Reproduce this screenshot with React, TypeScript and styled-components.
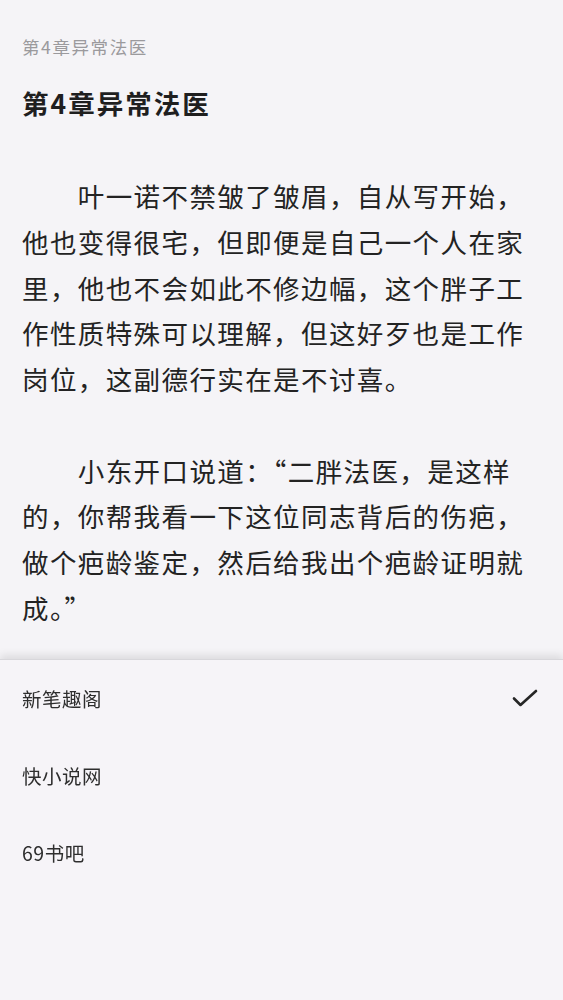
import styled, {createGlobalStyle} from "styled-components";

const GlobalStyle = createGlobalStyle`
    html, body {
        margin: 0;
        padding: 0;
        background: #f5f4f7;
    }
    body {
        font-family: "Noto Sans CJK SC", "Noto Sans", sans-serif;
        -webkit-font-smoothing: antialiased;
    }
`

const PageStyle = styled.main`
    min-height: 1000px;
    padding: 35px 22px 0 22px;
    box-sizing: border-box;
    background: #f5f4f7;
    color: #222;
`

const ChapterBarStyle = styled.div`
    font-size: 17.5px;
    line-height: 24px;
    letter-spacing: 1.6px;
    color: #9b9a9d;
`

const TitleStyle = styled.h1`
    margin: 26px 0 0 0;
    font-size: 26.5px;
    line-height: 36px;
    font-weight: 700;
    letter-spacing: 2px;
    color: #1f1f1f;
`

const ArticleStyle = styled.article`
    margin-top: 52px;
    display: flex;
    flex-direction: column;
    gap: 45.75px;
`

const ParagraphStyle = styled.p`
    margin: 0;
    font-size: 26.5px;
    line-height: 45.75px;
    letter-spacing: 1.4px;
    text-indent: 55.8px;
    color: #232323;
`

const SheetStyle = styled.section`
    position: fixed;
    left: 0;
    right: 0;
    bottom: 0;
    height: 340px;
    background: #f6f4f8;
    box-shadow: 0 -4px 8px rgba(0, 0, 0, 0.1);
    border-top: 1px solid #d8d7db;
`

const SourceRowStyle = styled.div`
    height: 77px;
    display: flex;
    align-items: center;
    justify-content: space-between;
    padding: 0 24px 0 22px;
    font-size: 19.5px;
    letter-spacing: 0.5px;
    color: #2e2e2e;
`

const paragraphs = [
    "叶一诺不禁皱了皱眉，自从写开始，他也变得很宅，但即便是自己一个人在家里，他也不会如此不修边幅，这个胖子工作性质特殊可以理解，但这好歹也是工作岗位，这副德行实在是不讨喜。",
    "小东开口说道：“二胖法医，是这样的，你帮我看一下这位同志背后的伤疤，做个疤龄鉴定，然后给我出个疤龄证明就成。”",
];

const sources = ["新笔趣阁", "快小说网", "69书吧"];

function CheckIcon() {
    return (
        <svg width="28" height="20" viewBox="0 0 28 20">
            <polyline points="3,9.5 9.5,16 25,2" fill="none" stroke="#262626" strokeWidth="2.6"
                      strokeLinecap="round" strokeLinejoin="round"/>
        </svg>
    );
}

export default function App() {
    const selected = 0;

    return (
        <>
            <GlobalStyle/>
            <PageStyle>
                <ChapterBarStyle>第4章异常法医</ChapterBarStyle>
                <TitleStyle>第4章异常法医</TitleStyle>
                <ArticleStyle>
                    {paragraphs.map((text, i) => (
                        <ParagraphStyle key={i}>{text}</ParagraphStyle>
                    ))}
                </ArticleStyle>
            </PageStyle>
            <SheetStyle>
                {sources.map((name, i) => (
                    <SourceRowStyle key={name}>
                        <span>{name}</span>
                        {i === selected && <CheckIcon/>}
                    </SourceRowStyle>
                ))}
            </SheetStyle>
        </>
    );
}
